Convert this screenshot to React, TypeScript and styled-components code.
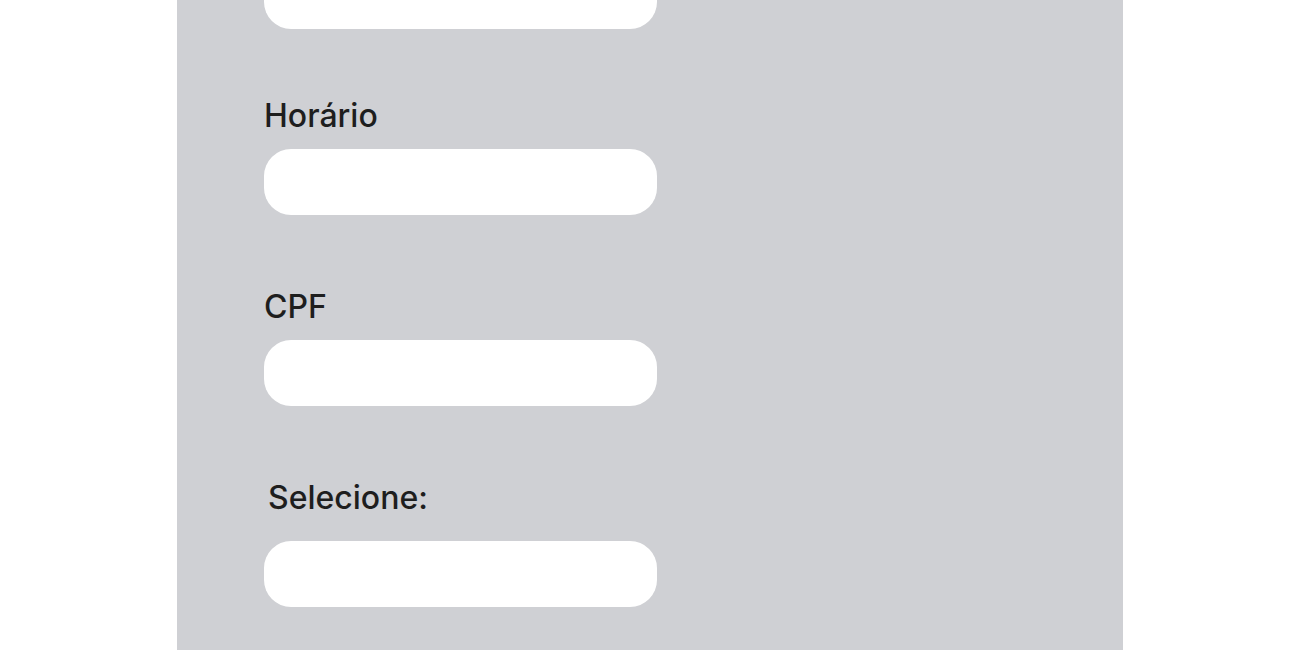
import React from "react";
import styled, { createGlobalStyle } from "styled-components";

const GlobalStyle = createGlobalStyle`
  *, *::before, *::after {
    box-sizing: border-box;
  }
  body {
    margin: 0;
    background: #ffffff;
    color: #1e1e1e;
    font-family: Inter, "Liberation Sans", sans-serif;
  }
`;

const Page = styled.main`
  display: grid;
  grid-template-columns: 177fr 946fr 177fr;
  min-height: 100vh;
`;

const Form = styled.form`
  grid-column: 2;
  display: flex;
  flex-direction: column;
  gap: 66px;
  padding: 0 87px 43px;
  background: #cfd0d4;
`;

const Field = styled.div<{ $gap?: number }>`
  display: flex;
  flex-direction: column;
  align-items: flex-start;
  gap: ${({ $gap = 12 }) => $gap}px;
  width: 100%;
  max-width: 393px;

  &:first-child {
    margin-top: -37px;
  }
  &:nth-child(n + 3) {
    margin-top: 5px;
  }
`;

const Label = styled.label<{ $inset?: boolean }>`
  padding-left: ${({ $inset }) => ($inset ? 4 : 0)}px;
  font-size: 32px;
  font-weight: 500;
  line-height: 42px;
`;

const TextBox = styled.input`
  width: 100%;
  height: 66px;
  padding: 0 24px;
  border: 0;
  border-radius: 27px;
  background: #ffffff;
  color: inherit;
  font: inherit;
  font-size: 28px;
`;

const SelectBox = styled(TextBox).attrs({ as: "select" })`
  appearance: none;
`;

export default function App() {
  return (
    <>
      <GlobalStyle />
      <Page>
        <Form>
          <Field>
            <TextBox type="text" aria-label="Data" />
          </Field>
          <Field>
            <Label htmlFor="horario">Horário</Label>
            <TextBox id="horario" type="text" />
          </Field>
          <Field>
            <Label htmlFor="cpf">CPF</Label>
            <TextBox id="cpf" type="text" />
          </Field>
          <Field $gap={22}>
            <Label htmlFor="selecione" $inset>
              Selecione:
            </Label>
            <SelectBox id="selecione" />
          </Field>
        </Form>
      </Page>
    </>
  );
}
